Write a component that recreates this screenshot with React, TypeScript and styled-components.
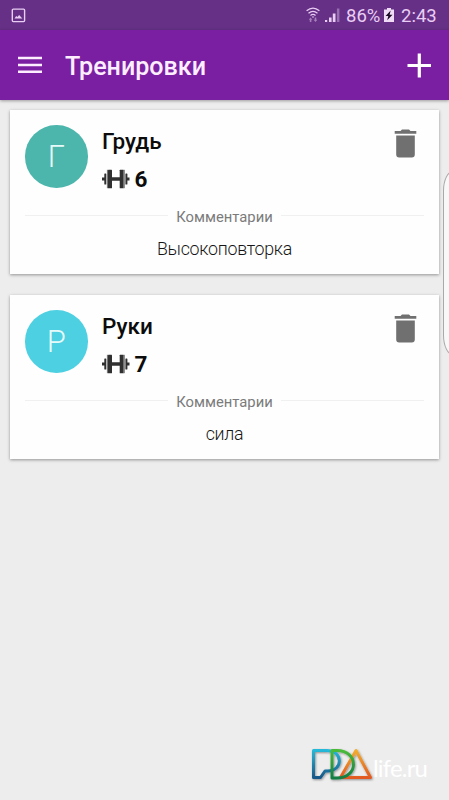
import React from 'react';
import styled, { createGlobalStyle } from 'styled-components';

const GlobalStyle = createGlobalStyle`
  * { box-sizing: border-box; }
  body { margin: 0; background: #ededed; font-family: Roboto, 'Noto Sans', sans-serif; }
  svg { display: block; flex: none; }
`;

const Screen = styled.div`
  position: relative;
  width: 449px;
  height: 800px;
  overflow: hidden;
  background: #ededed;
  display: flex;
  flex-direction: column;
`;

const StatusBar = styled.div`
  height: 30px;
  flex: none;
  display: flex;
  align-items: center;
  justify-content: space-between;
  padding: 0 12px 0 11px;
  background: #653085;
  color: #e9cdf4;
`;

const StatusGroup = styled.div`
  display: flex;
  align-items: center;
`;

const SignalSlot = styled.span`
  margin: 0 6px 0 5px;
`;

const StatusText = styled.span<{ $width: number }>`
  width: ${(p) => p.$width}px;
  font-size: 18.5px;
  line-height: 30px;
  padding-top: 1px;
  white-space: nowrap;
`;

const BatterySlot = styled.span`
  margin: 0 7px 0 3px;
`;

const AppBar = styled.header`
  height: 70px;
  flex: none;
  display: flex;
  align-items: center;
  padding: 0 17px 0 18px;
  background: #7b1fa2;
  box-shadow: 0 1px 3px rgba(0, 0, 0, 0.35);
`;

const Title = styled.h1`
  flex: 1;
  margin: 0 0 0 23px;
  padding-top: 3px;
  font-size: 25.1px;
  line-height: 30px;
  font-weight: 500;
  color: #fdeeff;
`;

const List = styled.main`
  display: flex;
  flex-direction: column;
  gap: 21px;
  padding: 10px 10px 0;
`;

const Card = styled.article`
  height: 164px;
  padding: 15px;
  background: #fefefe;
  box-shadow: 0 1px 3px rgba(0, 0, 0, 0.38);
`;

const CardHead = styled.div`
  display: flex;
  height: 84px;
  align-items: flex-start;
`;

const Avatar = styled.div<{ $color: string }>`
  width: 62.5px;
  height: 62.5px;
  flex: none;
  border-radius: 50%;
  display: flex;
  align-items: center;
  justify-content: center;
  background: ${(p) => p.$color};
  color: #e6fbf9;
  font-size: 31px;
  font-weight: 300;
`;

const Info = styled.div`
  flex: 1;
  margin-left: 14.5px;
`;

const Name = styled.h2`
  margin: 2px 0 0;
  font-size: 22.5px;
  line-height: 28px;
  font-weight: 500;
  color: #0c0c0c;
`;

const Count = styled.div`
  display: flex;
  align-items: center;
  gap: 5px;
  margin-top: 10px;
  font-size: 22.5px;
  line-height: 28px;
  font-weight: 700;
  color: #0c0c0c;
`;

const DeleteIcon = styled.svg`
  margin: 4px 7px 0 0;
`;

const Divider = styled.div`
  display: flex;
  gap: 8px;
  height: 16px;
  font-size: 14.8px;
  line-height: 17px;
  color: #7b7b7b;

  &::before,
  &::after {
    content: '';
    flex: 1;
    height: 1px;
    margin-top: 6px;
    background: #f0f0f0;
  }
`;

const Comment = styled.p`
  margin: 12px 0 0;
  text-align: center;
  font-size: 17.8px;
  line-height: 24px;
  font-weight: 300;
  letter-spacing: -0.28px;
  color: #161616;
`;

const EdgeHandle = styled.div`
  position: absolute;
  left: 443px;
  top: 171px;
  width: 24px;
  height: 184px;
  border: 1px solid #a9a9a9;
  border-radius: 10px / 20px;
  background: #f8f8f8;
`;

const Watermark = styled.div`
  position: absolute;
  left: 308px;
  top: 743px;
`;

const PictureIcon = () => (
  <svg width="15" height="15" viewBox="0 0 15 15">
    <rect x="1.3" y="1.1" width="12.3" height="12.5" rx="1" fill="none" stroke="currentColor" strokeWidth="1.4" />
    <path d="m3.500 10.500 1.700-2.600 1.200 1 1.700-2 3.300 3.600z" fill="currentColor" />
  </svg>
);

const WifiIcon = () => (
  <svg width="14" height="16" viewBox="0 0 14 16" fill="none" stroke="currentColor" strokeWidth="1.3">
    <path d="M.6 3.8Q7-1.6 13.4 3.8M2.5 6.3Q7 2.600 11.5 6.300M4.500 8.500Q7 6.400 9.500 8.500" />
    <path d="M5.700 9.400h2.600L7 11z" fill="currentColor" stroke="none" />
    <path d="m2.700 12.800 1.900-2.200 1.900 2.200H5.400v2.200H3.800v-2.200zM7.600 12.800h1.100v-2.200h1.600v2.200h1.100L9.500 15z" fill="currentColor" stroke="none" opacity=".5" />
  </svg>
);

const SignalIcon = () => (
  <svg width="15" height="15" viewBox="0 0 15 15" fill="currentColor">
    <path d="M0 12h2.200v2H0zM4 9.400h2.600V14H4zM7.800 5.500h2.700V14H7.800z" />
    <path d="M11.900.5h2.500V14h-2.500z" opacity=".4" />
  </svg>
);

const BatteryIcon = () => (
  <svg width="10" height="14" viewBox="0 0 10 14">
    <path d="M3 0h4v1.500h3V14H0V1.500h3z" fill="#f0dcf7" />
    <path d="M6.700 2.500 1.600 8h2.700l-1.100 4.200L8.500 6.700H5.600z" fill="#1c0a25" />
  </svg>
);

const MenuIcon = () => (
  <svg width="24" height="18" viewBox="0 0 24 18">
    <path d="M0 2h24M0 9h24M0 15.800h24" stroke="#fdeeff" strokeWidth="2.500" />
  </svg>
);

const PlusIcon = () => (
  <svg width="25" height="25" viewBox="0 0 25 25">
    <path d="M.5 12.500h23.500M12.300.500v24" stroke="#fff" strokeWidth="3.200" />
  </svg>
);

const DumbbellIcon = () => (
  <svg width="27.500" height="20" viewBox="0 0 27.500 20" fill="#303030">
    <path d="M0 8.500h3v3H0zM24.500 8.500h3v3h-3zM9 8.300h10v3.400H9z" />
    <rect x="2.300" y="4.500" width="2" height="11" rx=".6" />
    <rect x="4.900" y=".8" width="1.300" height="18.400" fill="#777" />
    <rect x="6" y=".8" width="4" height="18.400" rx=".5" />
    <rect x="17.700" y=".8" width="4" height="18.400" rx=".5" />
    <rect x="21.500" y=".8" width="1.300" height="18.400" fill="#777" />
    <rect x="23.400" y="4.500" width="2" height="11" rx=".6" />
  </svg>
);

const TrashIcon = () => (
  <DeleteIcon width="23" height="29" viewBox="0 0 23 29" fill="#707070">
    <path d="M.7 2h5.800L8 .6h7L16.500 2h5.800v2.800H.7zM2.200 6.600h18.600v18.800q0 3-3 3H5.200q-3 0-3-3z" />
  </DeleteIcon>
);

const Logo = () => (
  <svg width="130" height="46" viewBox="0 0 130 46">
    <defs>
      <linearGradient id="blue" x2="0" y2="1">
        <stop stopColor="#25b8d8" />
        <stop offset="1" stopColor="#185788" />
      </linearGradient>
      <linearGradient id="green" x2="0" y2="1">
        <stop stopColor="#4abb3a" />
        <stop offset="1" stopColor="#137d43" />
      </linearGradient>
      <linearGradient id="orange" x2="0" y2="1">
        <stop stopColor="#f2ad2f" />
        <stop offset="1" stopColor="#e25a20" />
      </linearGradient>
      <filter id="shade" x="-10%" y="-10%" width="120%" height="130%">
        <feDropShadow dx=".8" dy="1" stdDeviation=".8" floodOpacity=".4" />
      </filter>
    </defs>
    <g fill="none" strokeWidth="3" strokeLinejoin="round" filter="url(#shade)">
      <path d="M48 7.500 32.500 34.500H62.500z" stroke="url(#orange)" />
      <path d="M5.500 7.500h13c17 0 17 20.500 1 20.500H17L12.500 34.500h-7z" stroke="url(#blue)" />
      <path d="M24 7.500h5c22 0 22 27.500 0 27.500h-5z" stroke="url(#green)" />
    </g>
    <text
      x="65"
      y="33.500"
      fill="#fff"
      fontFamily="Lato, sans-serif"
      fontSize="24"
      fontWeight="400"
      textLength="55"
      lengthAdjust="spacing"
    >
      life.ru
    </text>
  </svg>
);

const workouts = [
  { letter: 'Г', name: 'Грудь', count: 6, comment: 'Высокоповторка', color: '#4db6ac' },
  { letter: 'Р', name: 'Руки', count: 7, comment: 'сила', color: '#4dd0e1' },
];

export default function App() {
  return (
    <>
      <GlobalStyle />
      <Screen>
        <StatusBar>
          <PictureIcon />
          <StatusGroup>
            <WifiIcon />
            <SignalSlot><SignalIcon /></SignalSlot>
            <StatusText $width={35}>86%</StatusText>
            <BatterySlot><BatteryIcon /></BatterySlot>
            <StatusText $width={36}>2:43</StatusText>
          </StatusGroup>
        </StatusBar>
        <AppBar>
          <MenuIcon />
          <Title>Тренировки</Title>
          <PlusIcon />
        </AppBar>
        <List>
          {workouts.map((w) => (
            <Card key={w.name}>
              <CardHead>
                <Avatar $color={w.color}>{w.letter}</Avatar>
                <Info>
                  <Name>{w.name}</Name>
                  <Count><DumbbellIcon />{w.count}</Count>
                </Info>
                <TrashIcon />
              </CardHead>
              <Divider>Комментарии</Divider>
              <Comment>{w.comment}</Comment>
            </Card>
          ))}
        </List>
        <EdgeHandle />
        <Watermark><Logo /></Watermark>
      </Screen>
    </>
  );
}
